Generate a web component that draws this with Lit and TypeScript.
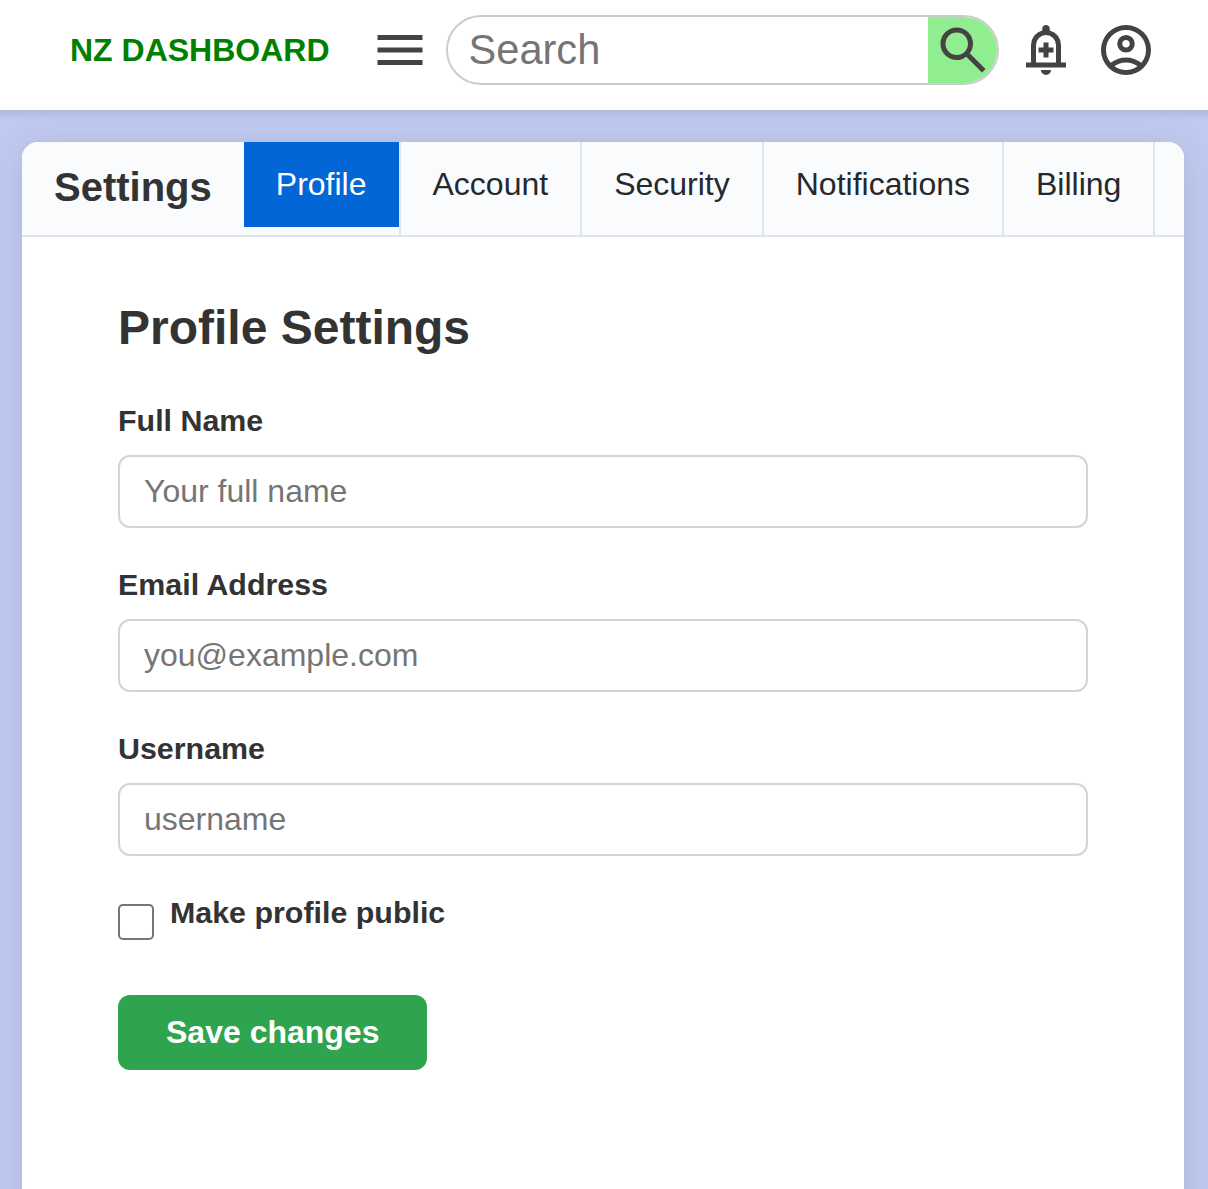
import { LitElement, html, css, svg } from "lit";
import { customElement, state } from "lit/decorators.js";

const ICONS: Record<string, string> = {
  menu: "M120-240v-80h720v80H120Zm0-200v-80h720v80H120Zm0-200v-80h720v80H120Z",
  search:
    "M784-120 532-372q-30 24-69 38t-83 14q-109 0-184.5-75.5T120-580q0-109 75.5-184.5T380-840q109 0 184.5 75.5T640-580q0 44-14 83t-38 69l252 252-56 56ZM380-400q75 0 127.5-52.5T560-580q0-75-52.5-127.5T380-760q-75 0-127.5 52.5T200-580q0 75 52.5 127.5T380-400Z",
  alert:
    "M480-80q-33 0-56.5-23.5T400-160h160q0 33-23.5 56.5T480-80Zm-40-280h80v-80h80v-80h-80v-80h-80v80h-80v80h80v80ZM160-200v-80h80v-280q0-83 50-147.5T420-792v-28q0-25 17.5-42.5T480-880q25 0 42.5 17.5T540-820v28q80 20 130 84.5T720-560v280h80v80H160Zm160-80h320v-280q0-66-47-113t-113-47q-66 0-113 47t-47 113v280Z",
  account:
    "M234-276q51-39 114-61.5T480-360q69 0 132 22.5T726-276q35-41 54.5-93T800-480q0-133-93.5-226.5T480-800q-133 0-226.5 93.5T160-480q0 59 19.5 111t54.5 93Zm246-164q-59 0-99.5-40.5T340-580q0-59 40.5-99.5T480-720q59 0 99.5 40.5T620-580q0 59-40.5 99.5T480-440Zm0 360q-83 0-156-31.5T197-197q-54-54-85.5-127T80-480q0-83 31.5-156T197-763q54-54 127-85.5T480-880q83 0 156 31.5T763-763q54 54 85.5 127T880-480q0 83-31.5 156T763-197q-54 54-127 85.5T480-80Zm0-80q53 0 100-15.5t86-44.5q-39-29-86-44.5T480-280q-53 0-100 15.5T294-220q39 29 86 44.5T480-160Zm0-360q26 0 43-17t17-43q0-26-17-43t-43-17q-26 0-43 17t-17 43q0 26 17 43t43 17Z",
};

const icon = (name: string) =>
  html`<svg class="icon" viewBox="0 -960 960 960" aria-hidden="true">${svg`<path d=${ICONS[name]}></path>`}</svg>`;

const TABS = ["Profile", "Account", "Security", "Notifications", "Billing"];

const FIELDS = [
  { id: "name", label: "Full Name", placeholder: "Your full name" },
  { id: "email", label: "Email Address", placeholder: "you@example.com" },
  { id: "username", label: "Username", placeholder: "username" },
];

@customElement("app-header")
class AppHeader extends LitElement {
  static styles = css`
    :host {
      display: flex;
      align-items: center;
      box-sizing: border-box;
      height: 110px;
      padding: 0 52px 10px 70px;
      background: #fff;
      box-shadow: 0 0 8px 4px rgba(0, 0, 0, 0.1);
      position: relative;
      font-family: "Liberation Sans", Arial, sans-serif;
    }
    .brand {
      width: 300px;
      font-size: 32px;
      line-height: 36px;
      font-weight: 700;
      color: #008000;
      white-space: nowrap;
    }
    .icon {
      display: block;
      width: 60px;
      height: 60px;
      fill: #434343;
    }
    button {
      flex: none;
      padding: 0;
      border: 0;
      background: none;
    }
    .search {
      display: flex;
      box-sizing: border-box;
      width: 553px;
      height: 70px;
      margin: 0 17px 0 16px;
      border: 2px solid #ccc;
      border-radius: 40px;
      overflow: hidden;
    }
    .query {
      flex: 1;
      min-width: 0;
      padding: 0 20px 0 20.5px;
      border: 0;
      outline: 0;
      background: none;
      font: 41.6px "Liberation Sans", Arial, sans-serif;
    }
    .query::placeholder {
      color: #757575;
    }
    .go {
      display: flex;
      width: 69px;
      padding: 3px 0 0 5px;
      background: #90ee90;
    }
    .account {
      margin-left: 20px;
    }
  `;
  render() {
    return html`
      <div class="brand">NZ DASHBOARD</div>
      <button class="menu" aria-label="Menu">${icon("menu")}</button>
      <div class="search">
        <input class="query" placeholder="Search" />
        <button class="go" aria-label="Search">${icon("search")}</button>
      </div>
      <button aria-label="Add alert">${icon("alert")}</button>
      <button class="account" aria-label="Account">${icon("account")}</button>
    `;
  }
}

@customElement("app-root")
class AppRoot extends LitElement {
  @state() private active = "Profile";

  static styles = css`
    :host {
      display: flex;
      flex-direction: column;
      height: 1189px;
      overflow: hidden;
      background: #c1caf0;
      color: #333;
      font-family: "Liberation Sans", Arial, sans-serif;
    }
    app-header {
      flex: none;
    }
    .card {
      flex: none;
      height: 1200px;
      margin: 32px 24px 0 22px;
      background: #fff;
      border-radius: 16px;
      box-shadow: 0 4px 40px rgba(0, 0, 0, 0.1);
      overflow: hidden;
    }
    .tabs {
      display: flex;
      height: 93px;
      background: #fafbfc;
      border-bottom: 2px solid #e1e4e8;
    }
    .title {
      margin: 0;
      padding: 23px 32px 0;
      font-size: 40px;
      line-height: 45px;
    }
    .cell {
      border-right: 2px solid #e1e4e8;
    }
    .tab {
      display: block;
      padding: 24px 32px;
      border: 0;
      background: none;
      color: #24292e;
      font: 32px/37px "Liberation Sans", Arial, sans-serif;
    }
    .tab.active {
      background: #0366d6;
      color: #fff;
    }
    .form {
      display: flex;
      flex-direction: column;
      align-items: stretch;
      padding: 64px 96px;
    }
    .heading {
      margin: 0 0 48px;
      font-size: 48px;
      line-height: 54px;
    }
    .field {
      margin-bottom: 39px;
    }
    .label {
      display: block;
      font-size: 30.4px;
      line-height: 35px;
      font-weight: 700;
    }
    .input {
      display: block;
      box-sizing: border-box;
      width: 100%;
      height: 73px;
      margin-top: 17px;
      padding: 0 24px;
      border: 2px solid #d1d5da;
      border-radius: 12px;
      background: #fff;
      font: 32px "Liberation Sans", Arial, sans-serif;
    }
    .input::placeholder {
      color: #757575;
    }
    .public {
      display: flex;
      gap: 16px;
      height: 100px;
    }
    .check {
      appearance: none;
      box-sizing: border-box;
      width: 36px;
      height: 36px;
      margin: 9px 0 0;
      border: 2px solid #767676;
      border-radius: 5px;
      background: #fff;
    }
    .save {
      align-self: flex-start;
      height: 75px;
      padding: 0 48px;
      border: 0;
      border-radius: 12px;
      background: #2ea44f;
      color: #fff;
      font: 700 32px "Liberation Sans", Arial, sans-serif;
    }
  `;

  render() {
    return html`
      <app-header></app-header>
      <main class="card">
        <nav class="tabs">
          <h2 class="title">Settings</h2>
          ${TABS.map(
            (t) => html`<div class="cell">
              <button class="tab ${t === this.active ? "active" : ""}" @click=${() => (this.active = t)}>${t}</button>
            </div>`
          )}
        </nav>
        <section class="form">
          <h1 class="heading">Profile Settings</h1>
          ${FIELDS.map(
            (f) => html`<div class="field">
              <label class="label" for=${f.id}>${f.label}</label>
              <input class="input" id=${f.id} placeholder=${f.placeholder} />
            </div>`
          )}
          <div class="public">
            <input class="check" id="public" type="checkbox" />
            <label class="label" for="public">Make profile public</label>
          </div>
          <button class="save">Save changes</button>
        </section>
      </main>
    `;
  }
}
